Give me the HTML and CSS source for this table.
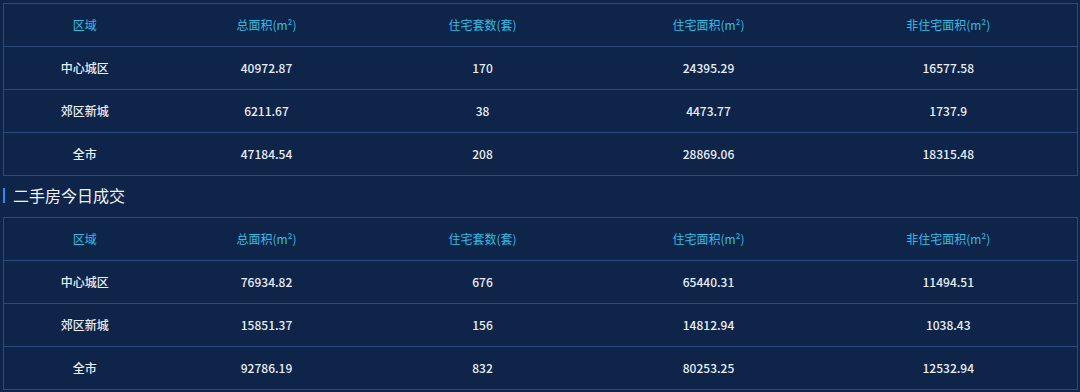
FILE: index.html
```html
<!DOCTYPE html>
<html lang="zh-CN">
<head>
<meta charset="utf-8">
<link rel="stylesheet" href="styles.css">
</head>
<body>
<div class="page">
  <table class="grid">
    <colgroup>
      <col class="c1"><col class="c2"><col class="c3"><col class="c4"><col class="c5">
    </colgroup>
    <thead>
      <tr><th>区域</th><th>总面积(m²)</th><th>住宅套数(套)</th><th>住宅面积(m²)</th><th>非住宅面积(m²)</th></tr>
    </thead>
    <tbody>
      <tr><td>中心城区</td><td>40972.87</td><td>170</td><td>24395.29</td><td>16577.58</td></tr>
      <tr><td>郊区新城</td><td>6211.67</td><td>38</td><td>4473.77</td><td>1737.9</td></tr>
      <tr><td>全市</td><td>47184.54</td><td>208</td><td>28869.06</td><td>18315.48</td></tr>
    </tbody>
  </table>
  <h2 class="section-title">二手房今日成交</h2>
  <table class="grid">
    <colgroup>
      <col class="c1"><col class="c2"><col class="c3"><col class="c4"><col class="c5">
    </colgroup>
    <thead>
      <tr><th>区域</th><th>总面积(m²)</th><th>住宅套数(套)</th><th>住宅面积(m²)</th><th>非住宅面积(m²)</th></tr>
    </thead>
    <tbody>
      <tr><td>中心城区</td><td>76934.82</td><td>676</td><td>65440.31</td><td>11494.51</td></tr>
      <tr><td>郊区新城</td><td>15851.37</td><td>156</td><td>14812.94</td><td>1038.43</td></tr>
      <tr><td>全市</td><td>92786.19</td><td>832</td><td>80253.25</td><td>12532.94</td></tr>
    </tbody>
  </table>
</div>
</body>
</html>
```
FILE: styles.css
```css
html, body {
  margin: 0;
  padding: 0;
  background: #0f2449;
}
body {
  font-family: "Noto Sans CJK SC", "Noto Sans", sans-serif;
  color: #e6ecf6;
}
.page {
  padding: 3px 3px 0 3px;
  width: 1074px;
}
.grid {
  width: 1074px;
  border-collapse: collapse;
  table-layout: fixed;
  border: 1px solid #2c4b7b;
}
.c1 { width: 162px; }
.c2 { width: 202px; }
.c3 { width: 230px; }
.c4 { width: 222px; }
.c5 { width: 258px; }
.grid th, .grid td {
  height: 42px;
  padding: 0;
  text-align: center;
  vertical-align: middle;
  font-size: 12px;
  line-height: 16px;
  border-bottom: 1px solid #2c4b7b;
}
.grid th {
  font-weight: normal;
  color: #2fbde6;
}
.grid td {
  color: #e8eef8;
  font-weight: 500;
}
.section-title {
  margin: 0;
  height: 38px;
  padding: 0 0 3px 10px;
  display: flex;
  align-items: center;
  font-size: 16px;
  font-weight: normal;
  color: #eef2f8;
  position: relative;
}
.section-title::before {
  content: "";
  position: absolute;
  left: 0;
  top: 12px;
  width: 2px;
  height: 15px;
  background: #2a8fe8;
}
```
